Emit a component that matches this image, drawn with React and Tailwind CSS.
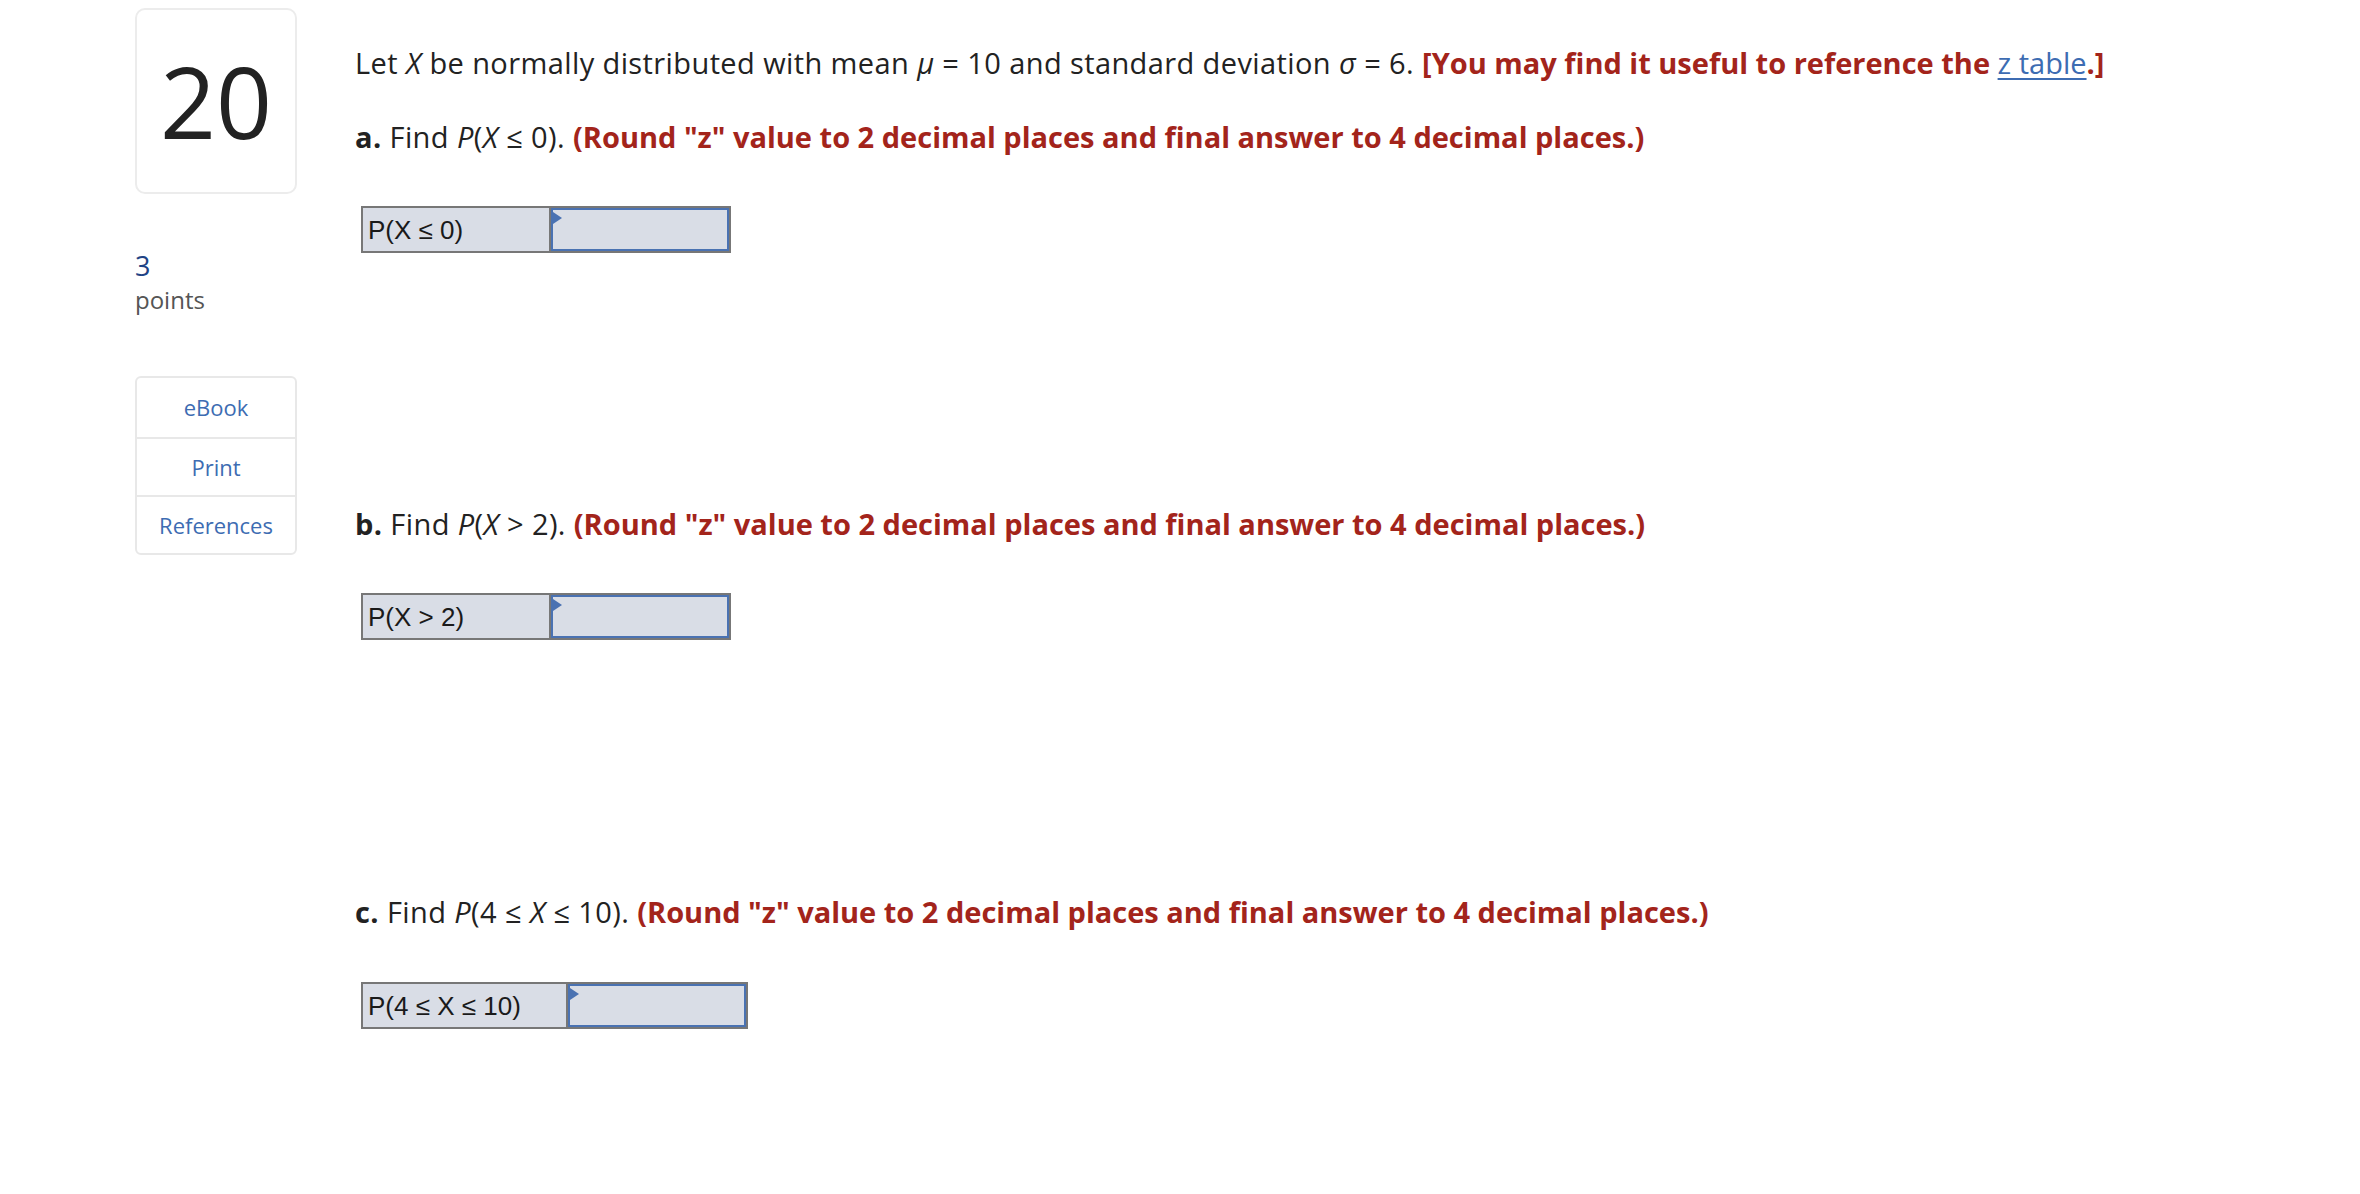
const SIDE_LINKS = ["eBook", "Print", "References"];

function AnswerBox({ label, labelWidth }) {
  return (
    <div className="ml-[6px] flex border-2 border-[#777777] h-[47px] w-fit tracking-normal">
      <div
        className={`${labelWidth} bg-[#d9dde6] border-r-2 border-[#777777] flex items-center pl-[5px] text-[26px] text-[#1a1a1a] font-['Liberation_Sans',Arial,sans-serif]`}
      >
        {label}
      </div>
      <div className="relative w-[178px] bg-[#d9dde6] border-2 border-[#4a72b2]">
        <span className="absolute left-0 top-[2px] w-0 h-0 border-y-[6px] border-y-transparent border-l-[9px] border-l-[#4a72b2]" />
      </div>
    </div>
  );
}

function Red({ children }) {
  return <span className="font-bold tracking-normal text-[#a3241b]">{children}</span>;
}

const ROUND_NOTE = '(Round "z" value to 2 decimal places and final answer to 4 decimal places.)';

export default function App() {
  return (
    <div className="min-h-screen bg-white font-['Open_Sans','Lato',sans-serif] text-[#222222] flex pl-[135px]">
      <aside className="w-[162px] shrink-0 pt-[8px] flex flex-col">
        <div className="h-[186px] border-2 border-[#ececec] rounded-[10px] flex items-center justify-center">
          <span className="text-[98px] leading-none text-[#222222]">20</span>
        </div>
        <div className="mt-[56px] text-[27px] leading-[32px] text-[#1f4385]">3</div>
        <div className="text-[24px] leading-[36px] text-[#555555]">points</div>
        <div className="mt-[58px] border-2 border-[#e8e8e8] rounded-md flex flex-col">
          {SIDE_LINKS.map((l, i) => (
            <div
              key={l}
              className={`flex items-center justify-center text-[22px] text-[#3d6cb2] ${
                i === 0 ? "h-[59px]" : "h-[58px] border-t-2 border-[#e8e8e8]"
              }`}
            >
              {l}
            </div>
          ))}
        </div>
      </aside>

      <main className="ml-[58px] pt-[44px] text-[29px] leading-[38px] tracking-[0.4px]">
        <p>
          Let <i>X</i> be normally distributed with mean <i>μ</i> = 10 and standard deviation{" "}
          <i>σ</i> = 6.{" "}
          <Red>
            [You may find it useful to reference the{" "}
            <span className="font-normal text-[#3d6cb2] underline underline-offset-4">z table</span>.]
          </Red>
        </p>

        <p className="mt-[36px]">
          <b>a.</b> Find <i>P</i>(<i>X</i> ≤ 0). <Red>{ROUND_NOTE}</Red>
        </p>
        <div className="mt-[50px]">
          <AnswerBox label="P(X ≤ 0)" labelWidth="w-[188px]" />
        </div>

        <p className="mt-[252px]">
          <b>b.</b> Find <i>P</i>(<i>X</i> &gt; 2). <Red>{ROUND_NOTE}</Red>
        </p>
        <div className="mt-[50px]">
          <AnswerBox label="P(X > 2)" labelWidth="w-[188px]" />
        </div>

        <p className="mt-[253px]">
          <b>c.</b> Find <i>P</i>(4 ≤ <i>X</i> ≤ 10). <Red>{ROUND_NOTE}</Red>
        </p>
        <div className="mt-[51px]">
          <AnswerBox label="P(4 ≤ X ≤ 10)" labelWidth="w-[205px]" />
        </div>
      </main>
    </div>
  );
}
